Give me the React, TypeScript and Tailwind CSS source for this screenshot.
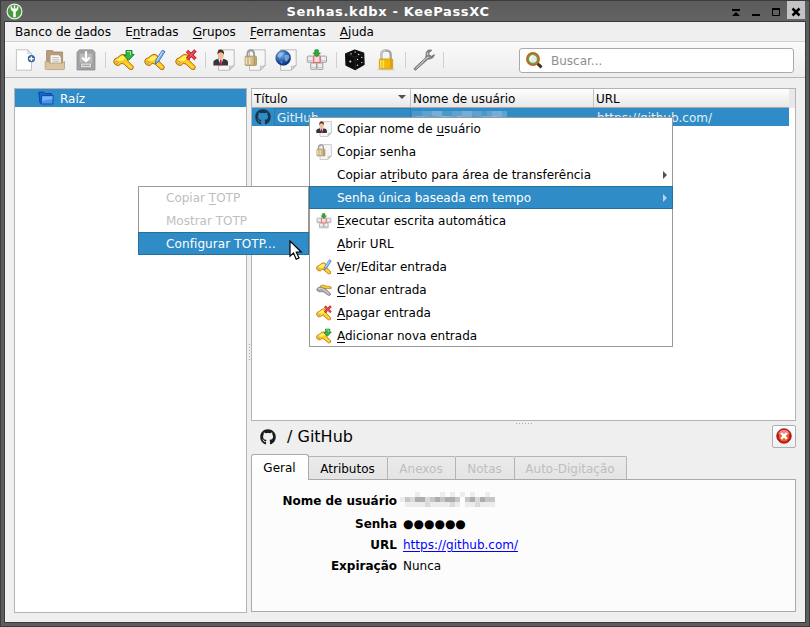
import React from "react";
import { FaGithub } from "react-icons/fa";

type IconProps = { size?: number };

function Svg({ size = 22, children }: IconProps & { children: React.ReactNode }) {
  return (
    <svg width={size} height={size} viewBox="0 0 22 22" fill="none" className="block shrink-0">
      {children}
    </svg>
  );
}

function KeyShape({ grey = false }: { grey?: boolean }) {
  return (
    <g>
      <path
        d="M.8 12Q1.2 9.3 4.2 8.8L8.1 5.8Q11.2 4.4 13.6 6.8 15.4 8.8 14.4 11.6L20.3 17.6 19.6 20.3 16.8 20.4 10.8 15 8.2 14.4 6.2 16.2Q3.6 17 1.8 15.1.6 13.8.8 12Z"
        fill={grey ? "#b4b4b4" : "#fcc81c"}
        stroke={grey ? "#777" : "#b36b12"}
        strokeWidth="1"
        strokeLinejoin="round"
      />
      <path d="M3 11 8.7 7Q11.3 6.3 12.8 8.5L9.5 11.8 5 11.9Z" fill={grey ? "#e5e5e5" : "#fff06a"} />
      <path d="M11.5 12.8 18.5 18.8" stroke={grey ? "#eee" : "#ffe95a"} strokeWidth="1" />
      <ellipse cx="3.9" cy="13.4" rx="1.2" ry=".9" fill="#fff" stroke="#9a6a20" strokeWidth=".6" />
    </g>
  );
}

function KeyAdd(p: IconProps) {
  return (
    <Svg {...p}>
      <KeyShape />
      <path d="M13 1.5H19V5.5H21.2L15.8 11.2 10.8 6.5H13Z" fill="#35b545" stroke="#137d27" strokeWidth=".9" strokeLinejoin="round" />
      <path d="M14 2.5H17.5V6" stroke="#a6eaaa" strokeWidth="1" />
    </Svg>
  );
}

function KeyEdit(p: IconProps) {
  return (
    <Svg {...p}>
      <KeyShape />
      <path d="M18.3 1.2 21 2.6 14.6 12.6 11.4 15.2 11.8 11.3Z" fill="#79aff5" stroke="#2a5fc0" strokeWidth=".8" strokeLinejoin="round" />
      <path d="M18.7 2.4 12.8 11.7" stroke="#d4e8ff" strokeWidth="1" />
    </Svg>
  );
}

function KeyDelete(p: IconProps) {
  return (
    <Svg {...p}>
      <KeyShape />
      <path d="M12 2 20.5 10M20.5 1.5 12 10" stroke="#b9191d" strokeWidth="3.2" />
      <path d="M12.3 2.3 20.2 9.7M20.2 1.8 12.3 9.7" stroke="#f0555b" strokeWidth="1.5" />
    </Svg>
  );
}

function KeyClone(p: IconProps) {
  return (
    <Svg {...p}>
      <path d="M6 5.5Q9 2.8 12.5 5.2L20.8 6.8 21 8.8 12 9.3 7 8.5Z" fill="#fccb29" stroke="#ad7119" strokeWidth=".9" />
      <path d="M1 9.5Q3 6.3 7.5 7.2L13 9.5 20.5 16.5 19 18.4 16.4 18 10 13.5 4 13.3Q.5 12 1 9.5Z" fill="#aaaaad" stroke="#6b6b70" strokeWidth=".9" />
      <path d="M3 9.3 8 8.5 18 16.5" stroke="#e6e6e8" strokeWidth="1.1" />
    </Svg>
  );
}

function Paper() {
  return (
    <>
      <path d="M5.5.8H21.2V16.5L16.2 21.3H5.5Z" fill="#f6f6f6" stroke="#b5b5b5" strokeWidth=".9" />
      <path d="M21 16.3 16.4 21V17Q19 17.8 21 16.3Z" fill="#d6d6d6" stroke="#aaa" strokeWidth=".6" />
    </>
  );
}

function CopyUser(p: IconProps) {
  return (
    <Svg {...p}>
      <Paper />
      <path d="M.4 16.5V12.8Q1 10.6 5.4 9.8H10Q14.6 10.6 15 12.8V16.5Z" fill="#34363c" />
      <path d="M5.2 9.8 7.8 16.5 10.3 9.8Z" fill="#f4f4fa" />
      <path d="M7.1 10.6H8.5L8.9 16.5H6.7Z" fill="#c0252b" />
      <ellipse cx="7.8" cy="5.8" rx="3" ry="4" fill="#edc09b" />
      <path d="M4.5 5.8Q4 .7 7.9.6 11.5.8 11 5.8 10.4 3.3 7.7 3.2 5.2 3.4 4.5 5.8Z" fill="#49311f" />
    </Svg>
  );
}

function CopyPassword(p: IconProps) {
  return (
    <Svg {...p}>
      <Paper />
      <path d="M3.4 7.7V4.7Q3.5 1.3 6.7 1.2 10 1.3 10.1 4.7V7.7" stroke="#9e9e9e" strokeWidth="1.9" />
      <rect x="1.2" y="7.2" width="11.2" height="9.2" rx=".7" fill="#d0b98a" stroke="#a28652" strokeWidth=".8" />
      <path d="M2.3 8.4V15.2M5.8 8.4V15.2" stroke="#f1e4c2" strokeWidth="1.3" />
      <path d="M10.6 8V16" stroke="#ad945f" strokeWidth="1.5" />
    </Svg>
  );
}

function CopyUrl(p: IconProps) {
  return (
    <Svg {...p}>
      <defs>
        <radialGradient id="globe" cx=".35" cy=".28" r=".8">
          <stop stopColor="#82bdf2" />
          <stop offset=".55" stopColor="#235cad" />
          <stop offset="1" stopColor="#0b2866" />
        </radialGradient>
      </defs>
      <Paper />
      <circle cx="8.2" cy="8.9" r="7.4" fill="url(#globe)" stroke="#15397d" strokeWidth=".6" />
      <path d="M4 3.7 7.5 3 8.8 4.7 6.3 6.7 5 9.3 2.2 7.2ZM9.7 6.2 13.3 5.6 14.7 8.2 12.5 11.8 10.6 12.7 9.4 9.4ZM5.2 12 7.4 12.5 7 14.9Z" fill="#9cc6ee" fillOpacity=".65" />
    </Svg>
  );
}

function AutoType(p: IconProps) {
  return (
    <Svg {...p}>
      <g fill="#ededed" stroke="#969696" strokeWidth=".9">
        <rect x="1.3" y="7.1" width="6" height="6.2" rx=".7" />
        <rect x="14.5" y="7.1" width="6" height="6.2" rx=".7" />
        <rect x="4.7" y="14" width="5.8" height="6.4" rx=".7" />
        <rect x="11" y="14" width="5.8" height="6.4" rx=".7" />
      </g>
      <path d="M5.2 18.4H10M11.5 18.4H16.3M1.8 11.7H6.5M15 11.7H20" stroke="#c4c4c4" strokeWidth="1" />
      <rect x="7.7" y="6.8" width="6.3" height="6.7" fill="#f5dada" stroke="#ec6670" strokeWidth="1.1" />
      <path d="M8.8.8H12.4V3.9H14.5L10.7 7.9 6.9 3.9H8.8Z" fill="#29aa40" stroke="#13822a" strokeWidth=".6" />
    </Svg>
  );
}

function NewDatabase() {
  return (
    <Svg>
      <path d="M3.4.8H14.7L18.5 4.6V21.2H3.4Z" fill="#fff" stroke="#bcbcbc" strokeWidth=".9" />
      <path d="M14.7.8V4.6H18.5Z" fill="#e4e4e4" stroke="#bcbcbc" strokeWidth=".6" />
      <circle cx="18.4" cy="9.7" r="3.6" fill="#3564a6" />
      <path d="M18.4 7.4V12M16.1 9.7H20.7" stroke="#fff" strokeWidth="1.4" />
    </Svg>
  );
}

function OpenDatabase() {
  return (
    <Svg>
      <path d="M2.6 1.6H8.6L9.8 3H18.6V17H2.6Z" fill="#b59c79" stroke="#a08763" strokeWidth=".8" />
      <path d="M6.3 6H14.8L17 8.2V16H6.3Z" fill="#fafafa" stroke="#b2a58d" strokeWidth=".6" />
      <path d="M8.2 8.7H14.8M8.2 10.8H15.3M8.2 12.8H15.3" stroke="#a5a5a5" strokeWidth=".8" />
      <path d="M1.2 12.5H4.5L5.6 14.2H18L20.5 12.5V19.5Q20.5 20.6 19.4 20.6H2.3Q1.2 20.6 1.2 19.5Z" fill="#dcc4a2" stroke="#b69c76" strokeWidth=".8" />
    </Svg>
  );
}

function SaveDatabase() {
  return (
    <Svg>
      <path d="M4.3.9H17.7L19.9 3.3V20.9H2.1V3.3Z" fill="#a5a5a5" stroke="#898989" strokeWidth=".9" />
      <rect x="4" y="4" width="14" height="12.3" rx="1" fill="#bababa" stroke="#949494" strokeWidth=".8" />
      <path d="M11 2.3V10.8M7.2 8.5 11 12.3 14.8 8.5" stroke="#fff" strokeWidth="2.1" />
      <rect x="5.5" y="14" width="11" height="4.8" rx=".7" fill="#e0e0e0" stroke="#858585" strokeWidth=".7" />
      <path d="M7.2 16.3H14.8" stroke="#999" strokeWidth="1" />
    </Svg>
  );
}

function Dice() {
  return (
    <Svg>
      <path d="M10.8 1.2 19.6 4.2 20 15.5 11.4 20.5 2.1 16.2 1.7 4.8Z" fill="#0c0c0c" stroke="#111" strokeWidth="1.4" strokeLinejoin="round" />
      <path d="M2.2 5 11 8.3 19.6 4.5M11 8.3 11.4 20" stroke="#2b2b2b" strokeWidth=".8" />
      <g fill="#e2e2e2">
        <ellipse cx="7" cy="4.8" rx=".9" ry=".6" />
        <ellipse cx="11.2" cy="3" rx=".9" ry=".6" />
        <ellipse cx="14.6" cy="5.3" rx=".9" ry=".6" />
        <circle cx="6.3" cy="12.5" r="1" />
        <circle cx="17.8" cy="8.4" r=".7" />
        <circle cx="13.5" cy="10.4" r=".7" />
        <circle cx="17.8" cy="13.6" r=".7" />
        <circle cx="13.5" cy="16.3" r=".7" />
      </g>
    </Svg>
  );
}

function LockDatabase() {
  return (
    <Svg>
      <ellipse cx="11.2" cy="20.5" rx="9" ry="1.1" fill="#d1d1d1" />
      <path d="M6.3 11V5.5Q6.4 1.4 11 1.3 15.6 1.4 15.7 5.5V11" stroke="#a2a2a2" strokeWidth="2.3" />
      <path d="M6 10V5.3Q6.5 1.5 10.5 1.3" stroke="#dedede" strokeWidth=".9" />
      <rect x="4.4" y="10" width="13.3" height="9.8" rx=".7" fill="#f0b908" stroke="#d29206" strokeWidth=".8" />
      <path d="M5.7 11.1V19M8.4 11.1V19" stroke="#ffe25a" strokeWidth="1.5" />
      <path d="M16 11V19.2" stroke="#dda105" strokeWidth="2" />
    </Svg>
  );
}

function Wrench() {
  return (
    <Svg>
      <path d="M15.3 1Q12.4 3 13 6.4L12.6 8.8 1.1 19.4Q1 21 2.7 21.1L14.7 10.3 17.5 9.7Q20.9 9 21.4 5.7L18.4 7.3 15.5 5.2 16.1 3.5 18.8 1.2Z" fill="#8a8a8a" stroke="#666" strokeWidth=".8" strokeLinejoin="round" />
      <path d="M3 19.6 13.3 9.2 15.8 8.2M14.4 3.6 14.2 6" stroke="#dfdfdf" strokeWidth="1" />
    </Svg>
  );
}

function SearchIcon() {
  return (
    <svg width="17" height="17" viewBox="0 0 17 17" fill="none" className="block shrink-0">
      <path d="M11.5 11.5 15.5 15.4" stroke="#39302a" strokeWidth="3" />
      <circle cx="7" cy="7" r="5.7" fill="#e5ebed" stroke="#b46a20" strokeWidth="2.5" />
      <circle cx="7" cy="7" r="4.5" stroke="#71a33e" strokeWidth="1.3" />
      <path d="M4.8 8.7A3.2 3.2 0 0 1 7.3 3.8" stroke="#fff" strokeWidth="1.4" />
    </svg>
  );
}

function AppLogo() {
  return (
    <svg width="17" height="17" viewBox="0 0 17 17" fill="none" className="block">
      <circle cx="8.5" cy="8.5" r="7.4" fill="#479b3f" stroke="#e4eee2" strokeWidth="1.2" />
      <path d="M8.5 7.5V14.2" stroke="#f8fff6" strokeWidth="2.6" />
      <path d="M5.2 2.6Q3.6 5.2 5.4 7.3 6.6 8.8 8.5 8.8T11.6 7.3Q13.4 5.2 11.8 2.6L10.4 5.6H6.6Z" fill="#fff" />
      <path d="M8.5 2.2V5.8" stroke="#f5fff3" strokeWidth="1.4" />
    </svg>
  );
}

function FolderIcon() {
  return (
    <svg width="16" height="14" viewBox="0 0 16 14" fill="none" className="block">
      <path d="M.8 1.2H5.7L7 2.6H13.5V11.7L2 12Z" fill="#1766cc" stroke="#0845a2" />
      <path d="M3.8 4.5H15.3L14.8 13H3Z" fill="#4a93ec" stroke="#0c4ba7" strokeWidth=".9" />
      <path d="M4.5 5.4H14.5L14.2 8.2Q8 8.3 4 10Z" fill="#79b2f6" />
    </svg>
  );
}

function Accel({ text }: { text: string }) {
  const [before, key, after] = text.split("|");
  return (
    <span className="whitespace-pre">
      {before}
      {key && <span className="underline decoration-1 underline-offset-2">{key}</span>}
      {after}
    </span>
  );
}

function Separator() {
  return (
    <div className="flex h-4 w-[7px] shrink-0 justify-center">
      <div className="w-px bg-[#d0d0d0]" />
    </div>
  );
}

const toolGroups: React.ComponentType[][] = [
  [NewDatabase, OpenDatabase, SaveDatabase],
  [KeyAdd, KeyEdit, KeyDelete],
  [CopyUser, CopyPassword, CopyUrl, AutoType],
  [Dice, LockDatabase],
  [Wrench],
];

type Item = { text: string; icon?: React.ComponentType<IconProps>; arrow?: boolean; active?: boolean; disabled?: boolean };

const entryMenu: Item[] = [
  { text: "Copiar nome de |u|suário", icon: CopyUser },
  { text: "Cop|i|ar senha", icon: CopyPassword },
  { text: "Copiar at|r|ibuto para área de transferência", arrow: true },
  { text: "Senha única baseada em tempo", arrow: true, active: true },
  { text: "|E|xecutar escrita automática", icon: AutoType },
  { text: "|A|brir URL" },
  { text: "|V|er/Editar entrada", icon: KeyEdit },
  { text: "|C|lonar entrada", icon: KeyClone },
  { text: "|A|pagar entrada", icon: KeyDelete },
  { text: "|A|dicionar nova entrada", icon: KeyAdd },
];

const totpMenu: Item[] = [
  { text: "Copiar |T|OTP", disabled: true },
  { text: "Mostrar TOTP", disabled: true },
  { text: "Configurar TOTP...", active: true },
];

function MenuItem({ item }: { item: Item }) {
  const Icon = item.icon;
  const tone = item.active
    ? "border-y border-[#26709e] bg-[#308cc6] text-white border-x"
    : item.disabled
      ? "border-x border-[#999] text-[#bebebe]"
      : "border-x border-[#999] text-black";
  return (
    <div className={"flex h-[23px] items-center pl-[6px] pr-[5px] " + tone}>
      <div className="w-[21px] shrink-0">{Icon && <Icon size={16} />}</div>
      <div className={"mt-[2px] grow" + (item.active && !item.arrow ? " tracking-[0.1px]" : "")}>
        <Accel text={item.text} />
      </div>
      {item.arrow && (
        <svg width="4" height="8" viewBox="0 0 4 8" className="block">
          <path d="M0 0 4 4 0 8Z" fill={item.active ? "#b5d6eb" : "#505050"} />
        </svg>
      )}
    </div>
  );
}

function Mosaic({ rows, colors }: { rows: string[]; colors: string[] }) {
  return (
    <div className="flex flex-col">
      {rows.map((row, y) => (
        <div key={y} className="flex">
          {row.split("").map((c, x) => (
            <div key={x} className="size-[5px]" style={{ backgroundColor: colors[Number(c)] }} />
          ))}
        </div>
      ))}
    </div>
  );
}

const greys = ["#fcfcfc", "#ececec", "#dadada", "#c6c6c6", "#adadad"];
const blues = ["#308cc6", "#4a97cc", "#5fa2d2", "#74aeda", "#8abae0"];

function Tab({ label, width, disabled }: { label: string; width: string; disabled?: boolean }) {
  return (
    <div
      className={
        "flex h-[23px] items-center justify-center rounded-tr-[2px] border-r border-t border-[#b4b4b4] bg-linear-to-b from-[#ebebeb] to-[#e4e4e4] pr-px pt-[3px] " +
        width +
        (disabled ? " text-[#bebebe]" : " text-black")
      }
    >
      {label}
    </div>
  );
}

export default function App() {
  return (
    <div className="relative flex h-[627px] w-[810px] flex-col overflow-hidden border border-[#3b3b3b] bg-[#5d5d5d] px-[3px] pb-[3px] font-['DejaVu_Sans',sans-serif] text-[12px] leading-[15px] text-black">
      <header className="flex h-5 shrink-0 items-center bg-linear-to-b from-[#5b5b5b] to-[#636363]">
        <div className="w-[60px] pl-[2px]">
          <AppLogo />
        </div>
        <div className="grow pr-[18px] text-center text-[13px] font-bold tracking-[0.65px] text-white">Senhas.kdbx - KeePassXC</div>
        <div className="mr-px flex h-full w-[75px] shrink-0 items-start">
          <svg width="75" height="20" viewBox="0 0 75 20" className="block">
            <path d="M57 0H75V18H57Z" fill="#c4c2c4" />
            <path d="M2 8H10V10H2ZM2 15 6 11 10 15ZM22 13H30V15H22Z" fill="#000" />
            <path d="M42.5 8V14.5H49.5V8Z" fill="none" stroke="#000" />
            <path d="M42 7H50V9H42Z" fill="#000" />
            <path d="M62.5 7.5 69.5 14.5M69.5 7.5 62.5 14.5" stroke="#000" strokeWidth="2.5" />
          </svg>
        </div>
      </header>

      <div className="flex grow flex-col border border-[#3b3b3b] bg-[#efefef]">
        <nav className="flex h-5 shrink-0 items-center gap-[14.2px] border-b border-[#d2d2d2] pl-[10px] pt-[2px]">
          <Accel text="Banco de |d|ados" />
          <Accel text="E|n|tradas" />
          <Accel text="|G|rupos" />
          <Accel text="|F|erramentas" />
          <Accel text="|A|juda" />
        </nav>

        <div className="flex h-9 shrink-0 items-center border-b border-[#b7b7b7] bg-linear-to-b from-[#fafafa] to-[#ededed] pl-1">
          {toolGroups.map((group, i) => (
            <React.Fragment key={i}>
              {group.map((Icon, j) => (
                <div key={j} className="flex w-[31px] shrink-0 pl-1">
                  <Icon />
                </div>
              ))}
              <Separator />
            </React.Fragment>
          ))}
          <div className="ml-auto mr-[11px] mt-px flex h-[25px] w-[275px] items-center gap-[8px] rounded-[3px] border border-[#aaa] bg-white pl-[6px] text-[#8e8e8e]">
            <SearchIcon />
            <span className="mt-[2px]">Buscar...</span>
          </div>
        </div>

        <main className="flex grow pb-[9px] pl-[9px] pr-[9px] pt-[10px]">
          <aside className="h-[525px] w-[233px] shrink-0 border border-[#b4b4b4] bg-white">
            <div className="flex h-[18px] items-center gap-[6px] bg-[#308cc6] pl-[23px] text-white">
              <FolderIcon />
              <span className="mt-[3px]">Raíz</span>
            </div>
          </aside>

          <div className="flex w-1 shrink-0 flex-col items-center gap-[2px] pt-[256px]">
            {[0, 1, 2, 3, 4, 5].map((n) => (
              <i key={n} className="size-px bg-[#aaa]" />
            ))}
          </div>

          <section className="flex w-[545px] shrink-0 flex-col">
            <div className="h-[333px] shrink-0 border border-[#b4b4b4] bg-white">
              <div className="flex h-[19px] bg-[#e8e8e8]">
                <div className="flex w-[537px] items-center border-b border-[#a9a9a9] bg-linear-to-b from-white to-[#e7e7e7]">
                  <div className="flex h-full w-[159px] items-center justify-between border-r border-[#c4c4c4] pl-[2px] pr-1">
                    <span className="mt-[2px]">Título</span>
                    <svg width="8" height="4" viewBox="0 0 8 4" className="mb-[2px] block">
                      <path d="M0 0H8L4 4Z" fill="#505050" />
                    </svg>
                  </div>
                  <div className="flex h-full w-[183px] items-center border-r border-[#c4c4c4] pl-[2px] pt-[2px]">Nome de usuário</div>
                  <div className="pl-[2px] pt-[2px]">URL</div>
                </div>
              </div>
              <div className="flex h-[18px] w-[537px] items-center bg-[#308cc6] text-[#e4f0f8]">
                <div className="flex h-full w-[159px] items-center pl-[3px]">
                  <FaGithub size={16} color="#1b3549" />
                  <div className="ml-[3px] flex h-full grow items-center border border-[#2a7cb0] pl-[2px] pt-[2px]">GitHub</div>
                </div>
                <div className="h-full w-[183px] pl-px pt-[3px]">
                  <Mosaic rows={["1122331122332212332", "2332234324331233432"]} colors={blues} />
                </div>
                <div className="pl-[3px] pt-[2px]">https://github.com/</div>
              </div>
            </div>

            <div className="flex h-[33px] shrink-0 flex-col">
              <div className="flex h-1 items-center justify-center gap-[2px]">
                {[0, 1, 2, 3, 4, 5].map((n) => (
                  <i key={n} className="size-px bg-[#aaa]" />
                ))}
              </div>
              <div className="flex h-[23px] items-center pl-[9px]">
                <FaGithub size={16} color="#1b1b1b" />
                <span className="ml-[11px] text-[16px] leading-[18px]">/ GitHub</span>
                <div className="ml-auto flex h-[23px] w-6 items-center justify-center rounded-[2px] border border-[#b0b0b0] bg-linear-to-b from-white to-[#efefef]">
                  <svg width="16" height="16" viewBox="0 0 16 16" className="mb-px block">
                    <circle cx="8" cy="8" r="7.3" fill="#c6171c" stroke="#9e1015" strokeWidth=".8" />
                    <circle cx="8" cy="8.6" r="5" fill="#df6428" />
                    <path d="M2.3 6A6 6 0 0 1 13.7 6Q8 8 2.3 6Z" fill="#ee8584" />
                    <path d="M5.2 5.2 10.8 10.8M10.8 5.2 5.2 10.8" stroke="#fff" strokeWidth="2.4" />
                  </svg>
                </div>
              </div>
            </div>

            <div className="flex h-[26px] shrink-0 items-stretch">
              <div className="flex w-[58px] items-center justify-center rounded-t-[3px] border-x border-t border-[#aaa] bg-linear-to-b from-white to-[#fcfcfc] pr-px pt-[2px]">
                Geral
              </div>
              <div className="flex grow items-end border-b border-[#aaa]">
                <Tab label="Atributos" width="w-[79px]" />
                <Tab label="Anexos" width="w-[68px]" disabled />
                <Tab label="Notas" width="w-[59px]" disabled />
                <Tab label="Auto-Digitação" width="w-[112px]" disabled />
              </div>
            </div>

            <div className="h-[132px] shrink-0 border-x border-b border-[#aaa] bg-[#fcfcfc] pt-[10px]">
              <div className="flex h-[21px] items-center">
                <b className="mt-[2px] w-[145px] text-right">Nome de usuário</b>
                <div className="mb-[2px] ml-[3px]">
                  <Mosaic rows={["0001000010101010010", "1324423434430342433", "0111121111210112111"]} colors={greys} />
                </div>
              </div>
              <div className="flex h-[25px] items-center pt-[2px]">
                <b className="w-[145px] text-right">Senha</b>
                <span className="ml-[6px]">●●●●●●</span>
              </div>
              <div className="flex h-[18px] items-center">
                <b className="w-[145px] text-right">URL</b>
                <span className="ml-[6px] text-[#0000ff] underline decoration-1 underline-offset-2">https://github.com/</span>
              </div>
              <div className="flex h-6 items-center">
                <b className="w-[145px] text-right">Expiração</b>
                <span className="ml-[6px]">Nunca</span>
              </div>
            </div>
          </section>
        </main>
      </div>

      <div className="absolute left-[308px] top-[116px] w-[364px] bg-white">
        {entryMenu.map((item) => (
          <MenuItem key={item.text} item={item} />
        ))}
        <div className="absolute inset-x-0 top-0 h-px bg-[#999]" />
        <div className="absolute inset-x-0 bottom-0 h-px bg-[#999]" />
      </div>

      <div className="absolute left-[137px] top-[185px] w-[171px] bg-white">
        {totpMenu.map((item) => (
          <MenuItem key={item.text} item={item} />
        ))}
        <div className="absolute inset-x-0 top-0 h-px bg-[#999]" />
      </div>

      <svg width="14" height="21" viewBox="0 0 14 21" className="absolute left-[288px] top-[239px]">
        <path d="M1 1V16.2L4.5 13 7.2 19.2 10 18 7.3 12H12.2Z" fill="#fff" stroke="#000" strokeWidth="1.2" />
      </svg>
    </div>
  );
}
